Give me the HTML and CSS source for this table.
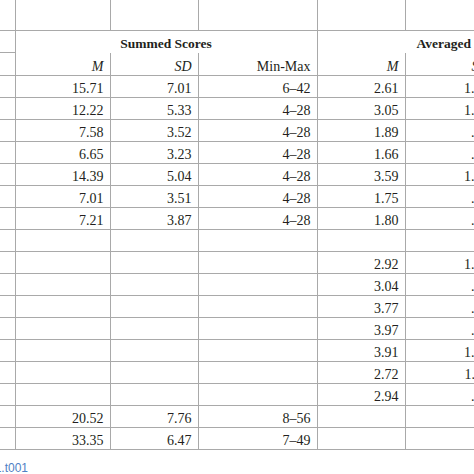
FILE: index.html
```html
<!DOCTYPE html>
<html lang="en">
<head>
<meta charset="utf-8">
<title>Table 1</title>
<link rel="stylesheet" href="styles.css">
</head>
<body>
<div class="page">
  <table class="stats">
    <colgroup>
      <col class="c-label">
      <col class="c-m">
      <col class="c-sd">
      <col class="c-range">
      <col class="c-m2">
      <col class="c-sd2">
      <col class="c-range2">
    </colgroup>
    <tbody>
      <tr class="row-top"><td></td><td></td><td></td><td></td><td></td><td></td><td></td></tr>
      <tr class="row-group"><td></td><th colspan="3">Summed Scores</th><th colspan="3">Averaged Scores</th></tr>
      <tr class="row-sub"><td></td><th><i>M</i></th><th><i>SD</i></th><th>Min-Max</th><th><i>M</i></th><th><i>SD</i></th><th>Min-Max</th></tr>
      <tr><td></td><td>15.71</td><td>7.01</td><td>6–42</td><td>2.61</td><td>1.17</td><td>1–7</td></tr>
      <tr><td></td><td>12.22</td><td>5.33</td><td>4–28</td><td>3.05</td><td>1.33</td><td>1–7</td></tr>
      <tr><td></td><td>7.58</td><td>3.52</td><td>4–28</td><td>1.89</td><td>.88</td><td>1–7</td></tr>
      <tr><td></td><td>6.65</td><td>3.23</td><td>4–28</td><td>1.66</td><td>.81</td><td>1–7</td></tr>
      <tr><td></td><td>14.39</td><td>5.04</td><td>4–28</td><td>3.59</td><td>1.26</td><td>1–7</td></tr>
      <tr><td></td><td>7.01</td><td>3.51</td><td>4–28</td><td>1.75</td><td>.88</td><td>1–7</td></tr>
      <tr><td></td><td>7.21</td><td>3.87</td><td>4–28</td><td>1.80</td><td>.97</td><td>1–7</td></tr>
      <tr><td></td><td></td><td></td><td></td><td></td><td></td><td></td></tr>
      <tr><td></td><td></td><td></td><td></td><td>2.92</td><td>1.05</td><td>1–5</td></tr>
      <tr><td></td><td></td><td></td><td></td><td>3.04</td><td>.96</td><td>1–5</td></tr>
      <tr><td></td><td></td><td></td><td></td><td>3.77</td><td>.94</td><td>1–5</td></tr>
      <tr><td></td><td></td><td></td><td></td><td>3.97</td><td>.89</td><td>1–5</td></tr>
      <tr><td></td><td></td><td></td><td></td><td>3.91</td><td>1.02</td><td>1–5</td></tr>
      <tr><td></td><td></td><td></td><td></td><td>2.72</td><td>1.11</td><td>1–5</td></tr>
      <tr><td></td><td></td><td></td><td></td><td>2.94</td><td>.99</td><td>1–5</td></tr>
      <tr><td></td><td>20.52</td><td>7.76</td><td>8–56</td><td></td><td></td><td></td></tr>
      <tr><td></td><td>33.35</td><td>6.47</td><td>7–49</td><td></td><td></td><td></td></tr>
    </tbody>
  </table>
  <p class="doi"><span>https://doi.org/10.1371/journal.pone.0245521.t001</span></p>
</div>
</body>
</html>
```

FILE: styles.css
```css
html, body {
  margin: 0;
  padding: 0;
  overflow: hidden;
  background: #ffffff;
}

.page {
  width: 474px;
  height: 474px;
  overflow: hidden;
}

.stats {
  border-collapse: collapse;
  table-layout: fixed;
  width: 611px;
  font: 14px "Liberation Serif", "Times New Roman", serif;
  color: #231f20;
}

.c-label { width: 15px; }
.c-m { width: 95px; }
.c-sd { width: 88px; }
.c-range { width: 119px; }
.c-m2 { width: 88px; }
.c-sd2 { width: 90px; }
.c-range2 { width: 116px; }

.stats td,
.stats th {
  border: 1px solid #a9a9a9;
  padding: 4px 6px 0;
  line-height: 17px;
  text-align: right;
  font-weight: normal;
  white-space: nowrap;
  overflow: hidden;
}

/* keep empty cells one line tall */
.stats td:empty::after {
  content: "";
  display: inline-block;
}

.stats tr > :first-child {
  border-left: none;
  padding: 4px 0 0;
}

.stats .row-top td {
  border-top: none;
  padding-top: 13px;
}

.stats .row-group th {
  font-weight: bold;
  font-size: 13.5px;
  text-align: center;
  border-bottom: hidden;
}

.stats .row-sub th {
  padding-top: 5px;
}

.doi {
  display: flex;
  justify-content: flex-end;
  width: 28px;
  overflow: hidden;
  margin: 0;
  padding-top: 11px;
  font: 12px/14px "Liberation Sans", Arial, sans-serif;
  color: #4f7fc4;
  white-space: nowrap;
}
```
